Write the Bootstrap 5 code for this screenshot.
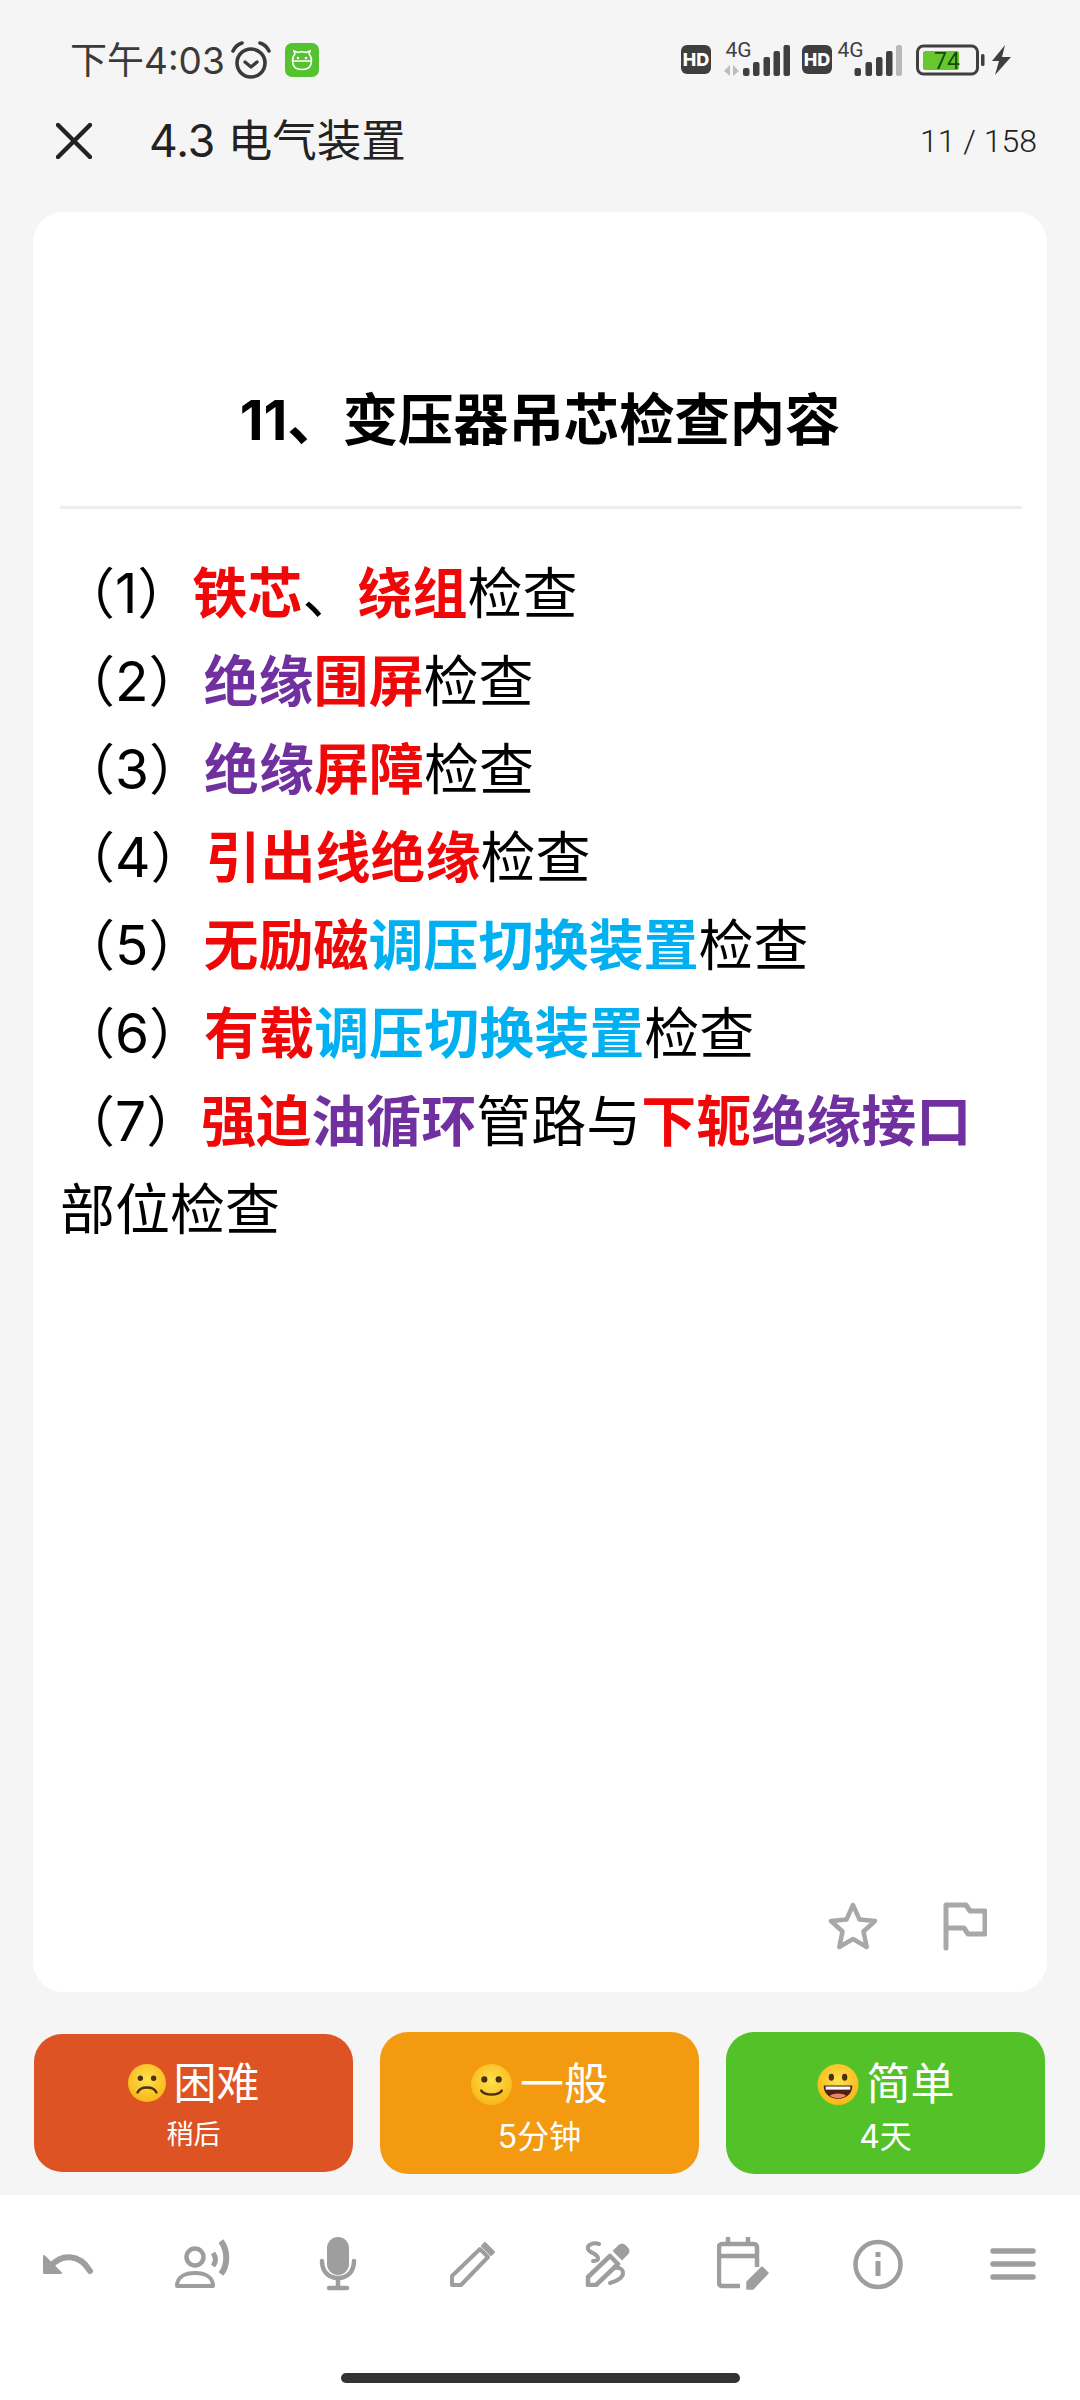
<!DOCTYPE html>
<html lang="zh-CN">
<head>
  <meta charset="UTF-8">
  <meta name="viewport" content="width=device-width, initial-scale=1.0">
  <title>4.3 电气装置</title>
  <link href="https://cdn.jsdelivr.net/npm/bootstrap@5.3.0/dist/css/bootstrap.min.css" rel="stylesheet">
  <style>
    body {
      height: 2400px;
      background-color: #f5f5f5;
      font-family: Inter, "Noto Sans CJK SC", sans-serif;
      color: #000;
    }
    .status-row {
      height: 80px;
      padding: 40px 0 0 70px;
      color: #3a3a3a;
      font-size: 37px;
      line-height: 37px;
    }
    .status-alarm { margin-left: 6px; }
    .status-app { margin-left: 14px; }
    .status-signal { margin-left: auto; margin-right: 64px; margin-top: -2px; }
    .head-row { height: 122px; padding: 0 43px 0 56px; color: #222; }
    .head-title { font-size: 44.500px; margin-left: 57px; line-height: 1; }
    .head-count { font-size: 32px; font-weight: 300; font-family: Roboto, sans-serif; }
    .note-card {
      margin: 10px 33px 0;
      height: 1780px;
      border: 0;
      border-radius: 30px;
      background-color: #fff;
    }
    .note-title {
      font-size: 55.300px;
      font-weight: 700;
      line-height: 70px;
      text-align: center;
      padding-top: 173px;
      margin: 0 0 51px;
    }
    .note-rule { height: 3px; margin: 0 25px 0 27px; background-color: #eee; }
    .note-body {
      font-size: 55px;
      line-height: 88px;
      padding: 40px 50px 0 27px;
    }
    .c-red { color: #f00808; font-weight: 700; }
    .c-purple { color: #7030a0; font-weight: 700; }
    .c-blue { color: #00b0f0; font-weight: 700; }
    .note-actions { margin-top: auto; padding: 0 60px 41px 0; gap: 64px; }
    .rate-row { padding: 40px 35px 0 34px; gap: 27px; height: 182px; }
    .rate-btn {
      flex: 1 1 0;
      height: 142px;
      padding: 5px 0 0;
      border: 0;
      border-radius: 28px;
      color: #fff;
      font-size: 44px;
      line-height: 50px;
    }
    .rate-btn:hover { color: #fff; }
    .rate-hard { background-color: #dd5324; height: 138px; margin-top: 2px; padding-top: 1px; font-size: 43px; }
    .rate-hard:hover { background-color: #dd5324; }
    .rate-mid { background-color: #f39a10; }
    .rate-mid:hover { background-color: #f39a10; }
    .rate-easy { background-color: #53c229; }
    .rate-easy:hover { background-color: #53c229; }
    .rate-sub { font-size: 32px; line-height: 30px; margin-top: 13px; }
    .rate-hard .rate-sub { font-size: 27px; margin-top: 12px; }
    .tool-bar { margin-top: auto; height: 205px; background-color: #fff; }
    .tool-row { padding-top: 42px; height: 96px; }
    .tool-cell { width: 135px; }
    .home-bar { width: 399px; height: 10px; margin: auto auto 17px; border-radius: 5px; background-color: #333; }
  </style>
</head>
<body class="d-flex flex-column">

<div class="status-row d-flex align-items-center">
  <span>下午4:03</span>
  <svg class="status-alarm" width="40" height="38" viewBox="0 0 40 38" fill="none" stroke="#3a3a3a">
    <circle cx="20" cy="22" r="14" stroke-width="3.6"/>
    <path d="M14 21l6 5 6-5" stroke-width="3.4" stroke-linecap="round" stroke-linejoin="round"/>
    <path d="M2 10C4 6 7 3 11 2M38 10C36 6 33 3 29 2" stroke-width="3.6" stroke-linecap="round"/>
  </svg>
  <svg class="status-app" width="34" height="34" viewBox="0 0 34 34">
    <rect width="34" height="34" rx="7" fill="#55c22f"/>
    <g fill="none" stroke="#fff" stroke-width="1.5" stroke-linecap="round">
      <path d="M10 11l-1-3 4 1.5c2.500-.8 5.500-.8 8 0L25 8l-1 3c2 2 2.500 4 2.500 7 0 6-4 8.500-9.500 8.500S7.500 24 7.500 18c0-3 .5-5 2.500-7z"/>
      <path d="M8 18h18"/>
    </g>
    <circle cx="13" cy="15" r="1.300" fill="#fff"/>
    <circle cx="21" cy="15" r="1.300" fill="#fff"/>
  </svg>
  <svg class="status-signal" width="340" height="40" viewBox="676 40 340 40">
    <g fill="#3f3f3f">
      <rect x="681" y="46" width="30" height="29" rx="6"/>
      <rect x="802" y="46" width="30" height="29" rx="6"/>
      <rect x="743" y="69" width="6.500" height="8" rx="2"/>
      <rect x="753" y="63" width="6.500" height="14" rx="2"/>
      <rect x="763.500" y="58" width="6.500" height="19" rx="2"/>
      <rect x="773.500" y="52" width="6.500" height="25" rx="2"/>
      <rect x="783.500" y="46" width="6.500" height="31" rx="2"/>
      <rect x="854.500" y="69" width="6.500" height="8" rx="2"/>
      <rect x="865.500" y="63" width="6.500" height="14" rx="2"/>
      <rect x="876" y="58" width="6.500" height="19" rx="2"/>
      <rect x="886" y="52" width="6.500" height="25" rx="2"/>
      <path d="M992 62l13-16-3 12h9l-16 18 4-14z"/>
      <rect x="981" y="55" width="3.500" height="12" rx="1.500"/>
    </g>
    <rect x="896" y="46" width="6" height="31" rx="2" fill="#b9b9b9"/>
    <path d="M730 66v11l-6-5zM733 66v11l6-5z" fill="#bdbdbd"/>
    <g font-family="Inter, sans-serif" font-weight="800" font-size="18" fill="#fff" text-anchor="middle">
      <text x="696" y="67">HD</text>
      <text x="817" y="67">HD</text>
    </g>
    <g font-family="Roboto, sans-serif" font-size="21" fill="#3f3f3f">
      <text x="725.500" y="58">4G</text>
      <text x="837.500" y="58">4G</text>
    </g>
    <rect x="917.500" y="47" width="60" height="28" rx="6" fill="none" stroke="#3f3f3f" stroke-width="3"/>
    <rect x="923" y="52" width="36" height="19" rx="2" fill="#66c72f"/>
    <text x="947" y="70" font-family="Roboto, sans-serif" font-size="23" fill="#1a4a10" text-anchor="middle">74</text>
  </svg>
</div>

<div class="head-row d-flex align-items-center">
  <svg width="36" height="36" viewBox="0 0 36 36" stroke="#222" stroke-width="4.500" stroke-linecap="round">
    <path d="M2 2l32 32M34 2L2 34"/>
  </svg>
  <span class="head-title">4.3 电气装置</span>
  <span class="head-count ms-auto">11 / 158</span>
</div>

<div class="card note-card">
  <h1 class="note-title">11、变压器吊芯检查内容</h1>
  <div class="note-rule"></div>
  <div class="note-body">
    <div>（1）<span class="c-red">铁芯</span>、<span class="c-red">绕组</span>检查</div>
    <div>（2）<span class="c-purple">绝缘</span><span class="c-red">围屏</span>检查</div>
    <div>（3）<span class="c-purple">绝缘</span><span class="c-red">屏障</span>检查</div>
    <div>（4）<span class="c-red">引出线绝缘</span>检查</div>
    <div>（5）<span class="c-red">无励磁</span><span class="c-blue">调压切换装置</span>检查</div>
    <div>（6）<span class="c-red">有载</span><span class="c-blue">调压切换装置</span>检查</div>
    <div>（7）<span class="c-red">强迫</span><span class="c-purple">油循环</span>管路与<span class="c-red">下轭</span><span class="c-purple">绝缘接口</span>部位检查</div>
  </div>
  <div class="note-actions d-flex justify-content-end align-items-center">
    <svg width="50" height="48" viewBox="0 0 50 48" fill="none" stroke="#a8a8a8" stroke-width="4.500" stroke-linejoin="round">
      <path d="M25 3l6.500 14.500 15.500 1.500-11.500 10.500 3.200 15.500L25 37l-13.700 8 3.200-15.500L3 19l15.500-1.500z"/>
    </svg>
    <svg width="45" height="50" viewBox="0 0 45 50" fill="none" stroke="#a8a8a8" stroke-width="5" stroke-linecap="round" stroke-linejoin="round">
      <path d="M4 47V4h20l4 6h15v23H26l-4-6H4"/>
    </svg>
  </div>
</div>

<div class="rate-row d-flex align-items-start">
  <button type="button" class="btn rate-btn rate-hard">
    <span class="d-flex justify-content-center align-items-center gap-2">
      <svg width="38" height="38" viewBox="0 0 40 40">
        <defs><radialGradient id="faceA" cx="50%" cy="40%" r="60%"><stop offset="0" stop-color="#ffe14d"/><stop offset="1" stop-color="#f7b718"/></radialGradient></defs>
        <circle cx="20" cy="20" r="20" fill="url(#faceA)"/>
        <circle cx="13" cy="15" r="2.800" fill="#4a2f10"/><circle cx="27" cy="15" r="2.800" fill="#4a2f10"/>
        <path d="M10 30c3-7 17-7 20 0" fill="none" stroke="#4a2f10" stroke-width="2.400" stroke-linecap="round"/>
      </svg>
      <span>困难</span>
    </span>
    <span class="d-block rate-sub">稍后</span>
  </button>
  <button type="button" class="btn rate-btn rate-mid">
    <span class="d-flex justify-content-center align-items-center gap-2">
      <svg width="41" height="41" viewBox="0 0 40 40">
        <circle cx="20" cy="20" r="20" fill="url(#faceA)"/>
        <circle cx="13" cy="15" r="3" fill="#4a2f10"/><circle cx="27" cy="15" r="3" fill="#4a2f10"/>
        <path d="M10 26c4 5 16 5 20 0" fill="none" stroke="#4a2f10" stroke-width="2.400" stroke-linecap="round"/>
      </svg>
      <span>一般</span>
    </span>
    <span class="d-block rate-sub">5分钟</span>
  </button>
  <button type="button" class="btn rate-btn rate-easy">
    <span class="d-flex justify-content-center align-items-center gap-2">
      <svg width="42" height="41" viewBox="0 0 40 40">
        <circle cx="20" cy="20" r="20" fill="url(#faceA)"/>
        <ellipse cx="13.500" cy="13" rx="2.600" ry="3.400" fill="#4a2f10"/><ellipse cx="26.500" cy="13" rx="2.600" ry="3.400" fill="#4a2f10"/>
        <path d="M6 21h28c0 9-7 13-14 13S6 30 6 21z" fill="#4a2114"/>
        <path d="M8 22h24v3H8z" fill="#fff"/>
        <path d="M12 31c4-3 12-3 16 0-4 3-12 3-16 0z" fill="#f0806a"/>
      </svg>
      <span>简单</span>
    </span>
    <span class="d-block rate-sub">4天</span>
  </button>
</div>

<div class="tool-bar d-flex flex-column">
  <div class="tool-row d-flex">
    <div class="tool-cell d-flex justify-content-center align-items-center">
      <svg width="52" height="24" viewBox="0 0 52 24" fill="none">
        <path d="M9 14C19 2 37 1 48 19" stroke="#9e9e9e" stroke-width="6" stroke-linecap="round"/>
        <path d="M2 4v17h17z" fill="#9e9e9e" stroke="#9e9e9e" stroke-width="2" stroke-linejoin="round"/>
      </svg>
    </div>
    <div class="tool-cell d-flex justify-content-center align-items-center">
      <svg width="58" height="50" viewBox="0 0 58 50" fill="none" stroke="#9e9e9e">
        <circle cx="21" cy="18" r="8.500" stroke-width="4.500"/>
        <path d="M3 47c0-9 8-13 18-13s18 4 18 13z" stroke-width="4" stroke-linejoin="round"/>
        <path d="M39 14c3 4 3 9 0 13" stroke-width="5"/>
        <path d="M47 2c7 10 7 24 0 33" stroke-width="6"/>
      </svg>
    </div>
    <div class="tool-cell d-flex justify-content-center align-items-center">
      <svg width="38" height="54" viewBox="0 0 38 54" fill="none">
        <rect x="8" y="0" width="22" height="38" rx="11" fill="#9e9e9e"/>
        <path d="M3 24c0 10 6 17 16 17s16-7 16-17" stroke="#9e9e9e" stroke-width="4.500" stroke-linecap="round"/>
        <path d="M19 41v9M10 51h18" stroke="#9e9e9e" stroke-width="4.500" stroke-linecap="round"/>
      </svg>
    </div>
    <div class="tool-cell d-flex justify-content-center align-items-center">
      <svg width="46" height="46" viewBox="0 0 46 46" fill="none" stroke="#9e9e9e" stroke-width="4">
        <path d="M2 44V35L30 8l8 8-27 28z" stroke-linejoin="round"/>
        <path d="M35 2l9 9-3 3-9-9z" fill="#9e9e9e" stroke-width="2" stroke-linejoin="round"/>
      </svg>
    </div>
    <div class="tool-cell d-flex justify-content-center align-items-center">
      <svg width="46" height="46" viewBox="0 0 46 46" fill="none" stroke="#9e9e9e" stroke-width="4.500">
        <path d="M3 44v-8l22-21 8 8-22 21z" stroke-linejoin="round"/>
        <path d="M29 10l5-5c2-2 4-2 6 0l2 2c2 2 2 4 0 6l-5 5z" fill="#9e9e9e" stroke-width="2"/>
        <path d="M14 3C8 1 2 4 3 8c1 4 9 4 10 9 .3 2-2 3-5 3M30 27c4-1 8 1 8 5 0 5-6 8-13 10" stroke-width="4" stroke-linecap="round"/>
      </svg>
    </div>
    <div class="tool-cell d-flex justify-content-center align-items-center">
      <svg width="52" height="54" viewBox="0 0 52 54" fill="none" stroke="#9e9e9e" stroke-width="4.500">
        <path d="M23 49H5a3 3 0 0 1-3-3V10a3 3 0 0 1 3-3h32a3 3 0 0 1 3 3v20M2 19h38M11 0v8M31 0v8"/>
        <path d="M30 52l0-7 15-15 6 6-15 16z" fill="#9e9e9e" stroke-width="1.500" stroke-linejoin="round"/>
      </svg>
    </div>
    <div class="tool-cell d-flex justify-content-center align-items-center">
      <svg width="50" height="51" viewBox="0 0 50 51" fill="none" stroke="#9e9e9e" stroke-width="4.500">
        <circle cx="25" cy="25.500" r="22.500"/>
        <path d="M25 22v15" stroke-width="5"/>
        <path d="M25 13v5" stroke-width="5"/>
      </svg>
    </div>
    <div class="tool-cell d-flex justify-content-center align-items-center">
      <svg width="46" height="32" viewBox="0 0 46 32" stroke="#9e9e9e" stroke-width="5.500" stroke-linecap="round">
        <path d="M3 3h40M3 16h40M3 29h40"/>
      </svg>
    </div>
  </div>
  <div class="home-bar"></div>
</div>

<script src="https://cdn.jsdelivr.net/npm/bootstrap@5.3.0/dist/js/bootstrap.bundle.min.js"></script>
</body>
</html>
